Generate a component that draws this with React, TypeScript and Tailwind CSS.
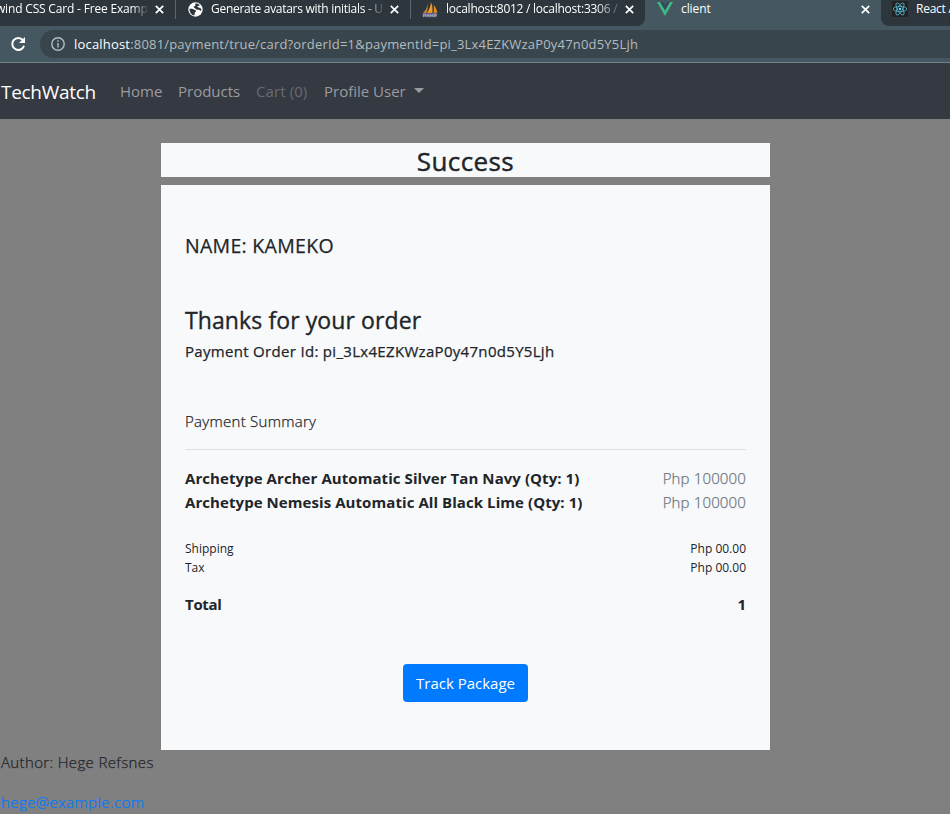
import React from "react";

function Close() {
  return (
    <svg className="h-[9px] w-[9px] shrink-0" viewBox="0 0 9 9" fill="none" stroke="#ffffff" strokeWidth="1.7">
      <path d="M0.8 0.8 8.2 8.2M8.2 0.8 0.8 8.2" />
    </svg>
  );
}

function Globe() {
  return (
    <svg className="h-[15px] w-[15px] shrink-0" viewBox="0 0 15 15">
      <circle cx="7.5" cy="7.5" r="7.2" fill="#fff" />
      <path d="M1.5 6.8c1.500 0 3.300 0 4.400.8.8.6 1.900.3 2.100 1.200.2 1.100-1.200 1.200-1.200 2.200 0 .9-.3 1.800-.6 2.500C3.300 12.900 1.500 10.200 1.500 6.800z" fill="#2c363c" />
      <path d="M7 1.700c2-.4 3.700.3 4.900 1.600-.5.700-2.100.4-2.500 1-.3.700 1.100 1.400 2.500 1.600.7.100 1.300.5 1.500 1.300-.1.700-.2 1.100-.5 1.700-.8-.5-1.400-1.200-2.500-1.200-1.300 0-2.500-.2-3.200-1.200-.6-.9-1.500-.5-1.600-1.400 0-1.100 1.900-.8 1.900-1.900 0-.5-.1-1-.5-1.500z" fill="#2c363c" />
    </svg>
  );
}

function Sails() {
  return (
    <svg className="h-4 w-4 shrink-0" viewBox="0 0 16 16">
      <path d="M5.200 1.500C5.400 5 4.200 8.500.8 11h3.400C5.800 8.500 6 5 5.200 1.500z" fill="#c98a3c" />
      <path d="M8.900.2C8.700 4 7.400 7.500 5 11h5.300C10.900 7 10.300 3 8.900.2z" fill="#f79a1e" />
      <path d="M11.500 2.500c.5 3 .6 6-.1 8.500H15.200c-.2-3-1.600-6-3.700-8.500z" fill="#e98a17" />
      <path d="M.5 11.300l15-.8-.7 4.700H.8z" fill="#5f5f80" />
      <path d="M1.500 15v-2.700H3.500v1.500H1.500M5 15v-3M5 13.500h2M7 12v3M8.500 15v-2.700l1.200 1.700 1.200-1.700V15M12.300 15v-2.700h2v1.500h-2" fill="none" stroke="#b4b4cc" strokeWidth=".7" />
    </svg>
  );
}

function VueLogo() {
  return (
    <svg className="h-[14px] w-4 shrink-0" viewBox="0 0 16 14">
      <path d="M0 0h3.200L8 8.300 12.800 0H16L8 13.900z" fill="#41b883" />
      <path d="M3.200 0h3L8 3.100 9.800 0h3L8 8.300z" fill="#35495e" />
    </svg>
  );
}

function ReactLogo() {
  return (
    <svg className="h-4 w-4 shrink-0" viewBox="0 0 16 16" fill="none" stroke="#55b9d4" strokeWidth=".8">
      <rect width="16" height="16" rx="1" fill="#222222" stroke="none" />
      <ellipse cx="8" cy="8" rx="6.800" ry="2.600" />
      <ellipse cx="8" cy="8" rx="6.800" ry="2.600" transform="rotate(60 8 8)" />
      <ellipse cx="8" cy="8" rx="6.800" ry="2.600" transform="rotate(120 8 8)" />
      <circle cx="8" cy="8" r="1.300" fill="#61dafb" stroke="none" />
    </svg>
  );
}

function Browser() {
  return (
    <header className="bg-[#455861]">
      <div className="flex h-[26px] overflow-hidden text-[12px] leading-4 text-white">
        <div className="flex w-[645px] shrink-0 rounded-br-[8px] bg-[#2c363c]">
          <div className="flex h-[19px] w-[176px] items-center border-r border-[#5c686f] pr-[11px]">
            <div className="h-[18px] w-[155px] overflow-hidden whitespace-nowrap [mask-image:linear-gradient(to_right,black_132px,transparent_149px)]">
              <span className="-ml-[4px] tracking-[-0.18px]">wind CSS Card - Free Example</span>
            </div>
            <Close />
          </div>
          <div className="flex h-[19px] w-[235px] items-center border-r border-[#5c686f] pl-3">
            <Globe />
            <div className="ml-2 h-[18px] w-[179px] overflow-hidden whitespace-nowrap [mask-image:linear-gradient(to_right,black_152px,transparent_176px)]">
              <span className="tracking-[-0.28px]">Generate avatars with initials - U</span>
            </div>
            <Close />
          </div>
          <div className="flex h-[19px] items-center pl-[11px]">
            <Sails />
            <div className="ml-2 h-[18px] w-[179px] overflow-hidden whitespace-nowrap [mask-image:linear-gradient(to_right,black_150px,transparent_178px)]">
              <span className="tracking-[-0.26px]">localhost:8012 / localhost:3306 /</span>
            </div>
            <Close />
          </div>
        </div>
        <div className="flex h-[18px] w-[236px] shrink-0 items-center pl-3">
          <VueLogo />
          <span className="ml-2 w-[180px] tracking-[-0.1px]">client</span>
          <Close />
        </div>
        <div className="w-[69px] shrink-0 overflow-hidden rounded-bl-[8px] bg-[#2c363c] pl-[11px]">
          <div className="flex h-[18px] items-center whitespace-nowrap">
            <ReactLogo />
            <span className="ml-2 tracking-[-0.25px]">React App</span>
          </div>
        </div>
      </div>
      <div className="flex h-9 items-center pl-[10px]">
        <svg className="mr-[14px] h-4 w-4" viewBox="0 0 16 16" fill="none" stroke="#fff" strokeWidth="2">
          <path d="M12.900 4.100A6 6 0 1 0 14 9.700" />
          <path d="M15 1v6H9z" fill="#fff" stroke="none" />
        </svg>
        <div className="flex h-7 flex-1 items-center rounded-l-full bg-[#38454c] pl-[11px]">
          <svg className="mr-[9px] h-[14px] w-[14px]" viewBox="0 0 14 14" fill="none" stroke="#b5bec2" strokeWidth="1.400">
            <circle cx="7" cy="7" r="6.200" />
            <path d="M7 6v4.500M7 3.300v1.500" />
          </svg>
          <span className="text-[13px] leading-5 tracking-[0.19px] text-[#b4bbbf]">
            <span className="text-white">localhost</span>:8081/payment/true/card?orderId=1&amp;paymentId=pi_3Lx4EZKWzaP0y47n0d5Y5Ljh
          </span>
        </div>
      </div>
      <div className="h-px bg-[#73838a]" />
    </header>
  );
}

function Navbar() {
  return (
    <nav className="flex h-14 items-center bg-[#353941] text-[15px] text-[#9a9ca0]">
      <span className="w-[120px] pl-px pt-[2px] text-[19px] tracking-[-0.3px] text-white">TechWatch</span>
      <span className="w-[58px]">Home</span>
      <span className="w-[78px]">Products</span>
      <span className="w-[68px] tracking-[0.1px] text-[#686b71]">Cart (0)</span>
      <span>Profile User</span>
      <span className="-mt-px ml-2 border-x-[5px] border-t-[5px] border-x-transparent border-t-[#9a9ca0]" />
    </nav>
  );
}

const items = [
  "Archetype Archer Automatic Silver Tan Navy (Qty: 1)",
  "Archetype Nemesis Automatic All Black Lime (Qty: 1)",
];

export default function App() {
  return (
    <div className="h-[827px] w-[950px] overflow-hidden bg-white font-['Open_Sans','Noto_Sans',sans-serif]">
      <Browser />
      <Navbar />
      <main className="h-[695px] bg-[#808080] pt-6 text-[15px] leading-6 text-[#212529]">
        <div className="ml-[161px] w-[609px]">
          <h1 className="mb-2 h-[34px] bg-[#f8f9fb] text-center text-[26px] font-medium leading-[36px] tracking-[0.4px] [-webkit-text-stroke:0.4px]">Success</h1>
          <section className="h-[565px] bg-[#f8f9fb] px-6 pt-12">
            <h2 className="h-[73px] text-[19.5px] font-medium leading-[26px] tracking-[0.3px] [-webkit-text-stroke:0.25px]">NAME: KAMEKO</h2>
            <h3 className="h-[34px] text-[23px] font-medium leading-[29px] tracking-[0.1px] [-webkit-text-stroke:0.35px]">Thanks for your order</h3>
            <p className="h-[69px] font-medium leading-[22px] tracking-[0.31px] [-webkit-text-stroke:0.25px]">Payment Order Id: pi_3Lx4EZKWzaP0y47n0d5Y5Ljh</p>
            <p className="h-[41px] border-b border-[#dfe0e3] font-light tracking-[0.28px] [-webkit-text-stroke:0.25px]">Payment Summary</p>
            <div className="mt-4">
              {items.map((name) => (
                <div key={name} className="flex h-6 justify-between">
                  <span className="font-bold tracking-[0.07px]">{name}</span>
                  <span className="font-light tracking-[0.15px] text-[#6c757d] [-webkit-text-stroke:0.25px]">Php 100000</span>
                </div>
              ))}
            </div>
            <div className="mt-[25px] text-[12px] leading-[19px]">
              <div className="flex justify-between"><span>Shipping</span><span>Php 00.00</span></div>
              <div className="flex justify-between"><span>Tax</span><span>Php 00.00</span></div>
            </div>
            <div className="mt-[15px] flex justify-between font-bold"><span className="tracking-[-0.3px]">Total</span><span>1</span></div>
            <div className="mt-12 flex justify-center">
              <button className="h-[38px] w-[125px] rounded-[4px] bg-[#007bff] text-white">Track Package</button>
            </div>
          </section>
        </div>
        <p className="pl-px font-light tracking-[0.36px] [-webkit-text-stroke:0.25px]">Author: Hege Refsnes</p>
        <p className="mt-4 pl-px font-light tracking-[0.42px] text-[#007bff] [-webkit-text-stroke:0.25px]">hege@example.com</p>
      </main>
    </div>
  );
}
